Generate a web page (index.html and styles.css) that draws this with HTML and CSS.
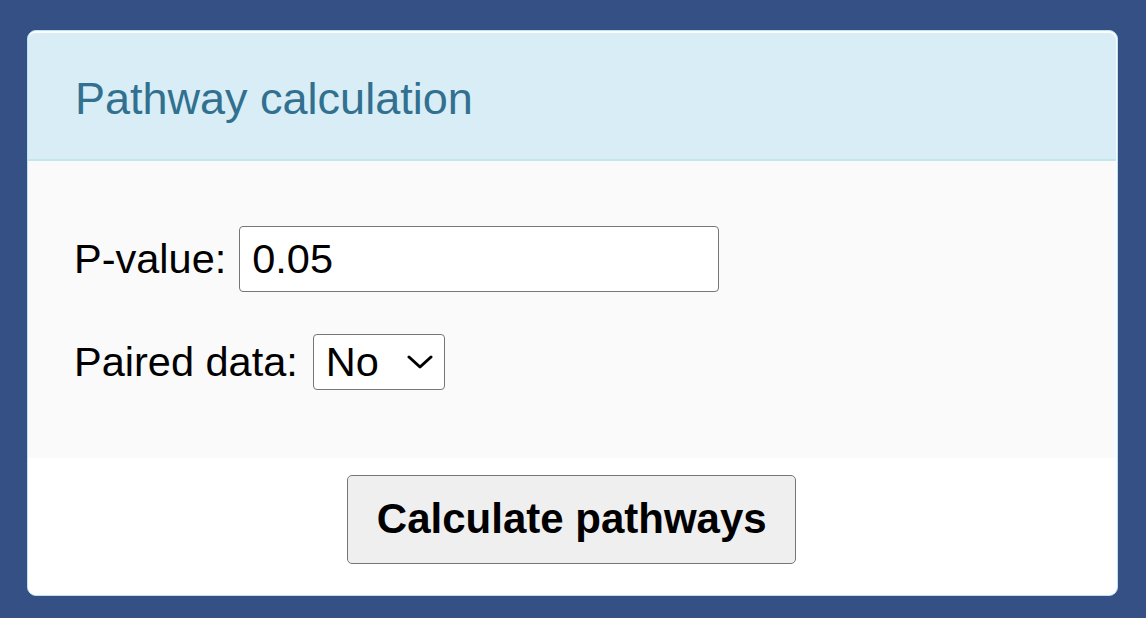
FILE: index.html
```html
<!DOCTYPE html>
<html>
<head>
<meta charset="utf-8">
<link rel="stylesheet" href="styles.css">
</head>
<body>
<div class="panel">
  <div class="panel-heading">
    <h3 class="panel-title">Pathway calculation</h3>
  </div>
  <div class="panel-body">
    <div class="row">
      <label class="lbl" for="pv">P-value:</label>
      <input id="pv" class="text-input" type="text" value="0.05">
    </div>
    <div class="row">
      <label class="lbl" for="pd">Paired data:</label>
      <span class="select-wrap">
        <select id="pd" class="select">
          <option>No</option>
          <option>Yes</option>
        </select>
        <svg class="chev" width="26" height="14" viewBox="0 0 26 14"><path d="M2 2 L13 12 L24 2" fill="none" stroke="#000" stroke-width="3" stroke-linecap="round" stroke-linejoin="round"/></svg>
      </span>
    </div>
  </div>
  <div class="panel-footer">
    <button class="btn" type="button">Calculate pathways</button>
  </div>
</div>
</body>
</html>
```
FILE: styles.css
```css
html, body {
  margin: 0;
  padding: 0;
}
body {
  background: #345084;
  font-family: "Liberation Sans", Arial, Helvetica, sans-serif;
  color: #000;
  padding: 30px 28px 21px 27px;
  height: 618px;
  box-sizing: border-box;
}
.panel {
  border: 1.5px solid #b8e4f0;
  border-radius: 9px;
  background: #fff;
  overflow: hidden;
  padding: 1.5px 1.5px 0 0;
}
.panel-heading {
  background: #d9edf7;
  border-bottom: 2px solid #c3e7ee;
  height: 126px;
  display: flex;
  align-items: center;
  padding-left: 47px;
  border-top-left-radius: 7px;
  border-top-right-radius: 7px;
}
.panel-title {
  margin: 0;
  font-weight: normal;
  font-size: 45px;
  color: #31708f;
  line-height: 1;
  padding-top: 6px;
}
.panel-body {
  background: #fafafa;
  padding: 65px 47px 68px 46px;
  display: flex;
  flex-direction: column;
  gap: 42px;
}
.row {
  display: flex;
  align-items: center;
  gap: 13px;
}
.lbl {
  font-size: 41.5px;
}
.row + .row .lbl + .select-wrap {
  margin-left: 2px;
}
.text-input {
  width: 480px;
  height: 66px;
  box-sizing: border-box;
  border: 1.5px solid #767676;
  border-radius: 4px;
  padding: 0 12px;
  font-family: inherit;
  font-size: 41.5px;
  color: #000;
  background: #fff;
  outline: none;
  margin: 0;
}
.select-wrap {
  position: relative;
  display: inline-block;
  width: 132px;
  height: 56px;
}
.select {
  appearance: none;
  -webkit-appearance: none;
  width: 132px;
  height: 56px;
  box-sizing: border-box;
  border: 1.5px solid #767676;
  border-radius: 4px;
  padding: 0 0 0 12px;
  font-family: inherit;
  font-size: 41.5px;
  color: #000;
  background: #fff;
  margin: 0;
  outline: none;
}
.chev {
  position: absolute;
  left: 94px;
  top: 21px;
  pointer-events: none;
}
.panel-footer {
  background: #fff;
  display: flex;
  justify-content: center;
  padding: 17px 0 31px;
}
.btn {
  width: 449px;
  height: 89px;
  box-sizing: border-box;
  background: #efefef;
  border: 1.5px solid #767676;
  border-radius: 5px;
  font-family: inherit;
  font-weight: bold;
  font-size: 42px;
  color: #000;
  padding: 0;
  margin: 0;
}
```
